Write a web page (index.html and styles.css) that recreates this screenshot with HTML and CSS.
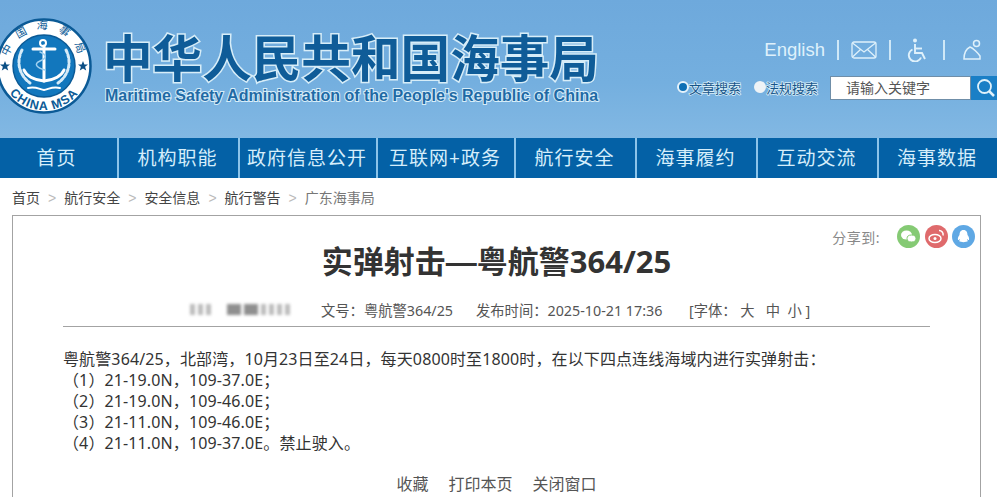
FILE: index.html
```html
<!DOCTYPE html>
<html lang="zh-CN">
<head>
    <meta charset="UTF-8">
    <meta name="viewport" content="width=device-width, initial-scale=1.0">
    <title>实弹射击—粤航警364/25</title>
    <link rel="stylesheet" href="styles.css">
</head>
<body>
    <header class="top">
        <svg class="logo" viewBox="0 0 98 98" width="98" height="98">
            <defs>
                <path id="arcTop" d="M17 65A36 36 0 1 1 81 65"/>
                <path id="arcBottom" d="M5 49a44 44 0 0 0 88 0"/>
            </defs>
            <circle cx="49" cy="49" r="46.500" fill="#fff" stroke="#0b5a96" stroke-width="2.500"/>
            <circle cx="49" cy="49" r="31" fill="#1277bd" stroke="#0b5a96" stroke-width="1.500"/>
            <text class="logo-cn"><textPath href="#arcTop" startOffset="52%" text-anchor="middle">中国海事局</textPath></text>
            <text class="logo-en"><textPath href="#arcBottom" startOffset="50%" text-anchor="middle">CHINA MSA</textPath></text>
            <path d="M10 44l1.400 3.500 3.600 0-2.900 2.300 1.100 3.700-3.200-2.100-3.200 2.100 1.100-3.700-2.900-2.300 3.600 0z" fill="#0b4f85"/>
            <path d="M88 44l1.400 3.500 3.600 0-2.900 2.300 1.100 3.700-3.200-2.100-3.200 2.100 1.100-3.700-2.900-2.300 3.600 0z" fill="#0b4f85"/>
            <g fill="none" stroke="#fff" stroke-linecap="round">
                <circle cx="48" cy="26" r="3" stroke-width="2"/>
                <path d="M49 29v35M38 32h22" stroke-width="3"/>
                <path d="M29 53c3 7 11 10 20 11 9-1 17-4 20-11" stroke-width="3"/>
                <path d="M45 35c7 3 7 6 0 9s-3 7 5 9" stroke="#9fd0f0" stroke-width="1.500"/>
                <path d="M27 33c-6 12-3 25 8 33M71 33c6 12 3 25-8 33" stroke="#d6ebf8" stroke-width="3" stroke-dasharray="3 2"/>
                <path d="M33 71c7-2 11 1 16 2 5-1 9-4 16-2" stroke-width="2"/>
            </g>
        </svg>
        <div class="brand">
            <div class="brand-cn">中华人民共和国海事局</div>
            <div class="brand-en">Maritime Safety Administration of the People's Republic of China</div>
        </div>
        <div class="tools">
            <div class="tool-links">
                <span class="english">English</span>
                <i class="bar"></i>
                <svg viewBox="0 0 26 18" width="26" height="18" fill="none" stroke="#dff1fb" stroke-width="1.300">
                    <rect x="1" y="1" width="24" height="16" rx="2"/>
                    <path d="M1.500 2l11.500 9 11.500-9M1.500 16l8-7.500M24.500 16l-8-7.500"/>
                </svg>
                <i class="bar"></i>
                <svg class="icon-wide" viewBox="0 0 20 24" width="20" height="24" fill="none" stroke="#dff1fb" stroke-width="1.900">
                    <circle cx="8" cy="2.500" r="2" fill="#dff1fb" stroke="none"/>
                    <path d="M8 6v9h7l3 6"/>
                    <path d="M8 10.500h7"/>
                    <path d="M5.500 11.500a6.300 6.300 0 1 0 8.500 8"/>
                </svg>
                <i class="bar"></i>
                <svg class="icon-last" viewBox="0 0 20 22" width="20" height="22" fill="none" stroke="#dff1fb" stroke-width="1.500">
                    <circle cx="14.500" cy="4.500" r="3"/>
                    <path d="M2 20c0-6 2-10 6-12 3 1 8 6 10 9v3z"/>
                </svg>
            </div>
            <div class="search-row">
                <label class="radio"><i class="dot dot-on"></i>文章搜索</label>
                <label class="radio"><i class="dot"></i>法规搜索</label>
                <div class="search">
                    <span class="search-input">请输入关键字</span>
                    <span class="search-btn">
                        <svg viewBox="0 0 20 20" width="20" height="20" fill="none" stroke="#dff1fb" stroke-width="1.800">
                            <circle cx="8.500" cy="8.500" r="6.500"/>
                            <path d="M13 13l5 5" stroke-width="2.500"/>
                        </svg>
                    </span>
                </div>
            </div>
        </div>
    </header>

    <nav class="nav">
        <a class="w-home">首页</a>
        <a class="w-a">机构职能</a>
        <a class="w-b">政府信息公开</a>
        <a class="w-b">互联网+政务</a>
        <a class="w-a">航行安全</a>
        <a class="w-a">海事履约</a>
        <a class="w-a">互动交流</a>
        <a class="w-last">海事数据</a>
    </nav>

    <div class="crumbs">
        <span class="crumb-dark">首页</span><b>&gt;</b>
        <span class="crumb-dark">航行安全</span><b>&gt;</b>
        <span class="crumb-dark">安全信息</span><b>&gt;</b>
        <span class="crumb-dark">航行警告</span><b>&gt;</b>
        <span>广东海事局</span>
    </div>

    <main class="panel">
        <div class="share">
            <span class="share-label">分享到:</span>
            <svg viewBox="0 0 23 23" width="23" height="23">
                <circle cx="11.500" cy="11.500" r="11.500" fill="#85ca74"/>
                <ellipse cx="9.500" cy="10" rx="5.500" ry="4.500" fill="#fff"/>
                <ellipse cx="14.500" cy="13.500" rx="4.500" ry="3.500" fill="#fff" stroke="#85ca74"/>
            </svg>
            <svg viewBox="0 0 23 23" width="23" height="23">
                <circle cx="11.500" cy="11.500" r="11.500" fill="#df6a6c"/>
                <ellipse cx="10" cy="13.500" rx="6" ry="4" fill="none" stroke="#fff" stroke-width="1.500"/>
                <circle cx="10" cy="13.500" r="1.500" fill="#fff"/>
                <path d="M14 5.500a4 4 0 0 1 4 5" fill="none" stroke="#fff" stroke-width="1.500"/>
            </svg>
            <svg viewBox="0 0 23 23" width="23" height="23">
                <circle cx="11.500" cy="11.500" r="11.500" fill="#5fa8e4"/>
                <path d="M11.500 5c3 0 4 2.500 4 5 1 1 2 3 1.500 5-1 0-1.500-.5-2-1 0 1 .5 1.500 1 2-2 1.500-7 1.500-9 0 .5-.5 1-1 1-2-.5.5-1 1-2 1-.5-2 .5-4 1.500-5 0-2.500 1-5 4-5z" fill="#fff"/>
            </svg>
        </div>

        <h1 class="title">实弹射击<span class="dash">—</span>粤航警364/25</h1>

        <div class="meta">
            <span class="blurred"><i class="sm"></i><i class="sm"></i><i class="sm"></i><i class="gap"></i><i class="lg"></i><i class="lg"></i><i class="sm"></i><i class="sm"></i><i class="sm"></i><i class="sm"></i></span>
            <span class="doc-no">文号：粤航警364/25</span>
            <span class="doc-time">发布时间：2025-10-21 17:36</span>
            <span class="doc-font">[字体： 大&nbsp;&nbsp; 中&nbsp; 小 ]</span>
        </div>

        <div class="content">
            <p>粤航警364/25，北部湾，10月23日至24日，每天0800时至1800时，在以下四点连线海域内进行实弹射击：</p>
            <p>（1）21-19.0N，109-37.0E；</p>
            <p>（2）21-19.0N，109-46.0E；</p>
            <p>（3）21-11.0N，109-46.0E；</p>
            <p>（4）21-11.0N，109-37.0E。禁止驶入。</p>
        </div>

        <div class="actions">
            <a>收藏</a>
            <a>打印本页</a>
            <a>关闭窗口</a>
        </div>
    </main>
</body>
</html>
```

FILE: styles.css
```css
* { box-sizing: border-box; }
html, body { height: 497px; overflow: hidden; }
body { margin: 0; background-color: #ffffff; font-family: "Noto Sans", "Noto Sans CJK SC", sans-serif; color: #333; }

.top { height: 138px; display: flex; background: linear-gradient(180deg, #6ea9dc 0%, #74afdf 60%, #82b8e3 100%); overflow: hidden; }
.logo { flex: none; margin: 17px 0 0 -5px; }
.logo-cn { font-family: "Noto Sans CJK SC", sans-serif; font-size: 11px; fill: #0b5a96; letter-spacing: 9.500px; }
.logo-en { font-family: "Liberation Sans", sans-serif; font-size: 12.500px; font-weight: bold; fill: #0b5a96; letter-spacing: 1px; }

.brand { flex: none; width: 500px; margin-left: 10px; padding-top: 24px; }
.brand-cn { font-family: "Noto Sans CJK SC", sans-serif; font-size: 49.600px; line-height: 62px; font-weight: 700; color: #0f5c98; white-space: nowrap; -webkit-text-stroke: 3px #d7edf8; paint-order: stroke fill; }
.brand-en { margin: 1px 0 0 2px; font-family: "Liberation Sans", sans-serif; font-size: 16px; line-height: 18px; font-weight: bold; color: #1f6aa5; white-space: nowrap; -webkit-text-stroke: 2px #d7edf8; paint-order: stroke fill; }

.tools { flex: 1; padding: 38px 0 0 74px; }
.tool-links { display: flex; align-items: center; justify-content: flex-end; height: 24px; padding-right: 15px; gap: 12px; }
.english { font-family: "Liberation Sans", sans-serif; font-size: 18.500px; color: #dff1fb; }
.bar { width: 2px; height: 20px; background-color: #cfe8f7; }
.icon-wide { margin: 0 4px; }
.icon-last { margin-left: 5px; }

.search-row { display: flex; align-items: center; margin-top: 14px; }
.radio { display: flex; align-items: center; width: 77px; padding-bottom: 2px; font-size: 13px; color: #16558a; white-space: nowrap; -webkit-text-stroke: 1.500px #d7edf8; paint-order: stroke fill; }
.dot { flex: none; width: 12px; height: 12px; border-radius: 50%; background-color: #eef3f6; }
.dot-on { background-color: #0c6fb5; border: 2px solid #e6f3fb; }
.search { display: flex; margin-left: -1px; }
.search-input { width: 141px; height: 24px; padding-left: 15px; background-color: #fff; border: 1px solid #6f8ea8; font-size: 14px; line-height: 22px; color: #555; }
.search-btn { width: 26px; height: 24px; display: flex; align-items: center; padding-left: 5px; background-color: #1a7fc6; }

.nav { display: flex; height: 40px; background-color: #0461a6; }
.nav a { display: block; padding-right: 2px; color: #d6eefb; font-size: 19px; line-height: 40px; text-align: center; letter-spacing: 1px; border-left: 2px solid #8cc4ea; }
.nav .w-home { width: 117px; border-left: none; padding-right: 4px; }
.nav .w-a { width: 121px; }
.nav .w-b { width: 138px; }
.nav .w-last { width: 120px; }

.crumbs { display: flex; height: 37px; padding: 9px 0 0 12px; font-size: 14px; line-height: 22px; color: #777; }
.crumbs b { margin: 0 8px; font-family: "Liberation Sans", sans-serif; font-weight: normal; color: #bbb; }
.crumb-dark { color: #444; }

.panel { position: relative; width: 969px; height: 282px; margin-left: 12px; padding: 0 50px; border: 1px solid #a3a3a3; border-bottom: none; }
.share { position: absolute; top: 9px; right: 5px; display: flex; align-items: center; gap: 4.500px; }
.share-label { margin-right: 12.500px; font-size: 14px; letter-spacing: .5px; color: #888; }

.title { margin: 23px 0 0; font-size: 31px; line-height: 44px; font-weight: 700; text-align: center; color: #333; }
.dash { font-family: "Liberation Sans", sans-serif; }

.meta { display: flex; align-items: center; height: 26px; margin-top: 16px; padding: 0 0 9px 124px; font-size: 14.300px; color: #555; border-bottom: 1px solid #a3a3a3; }
.blurred { display: flex; width: 134px; gap: 3px; padding-left: 3px; filter: blur(1.500px); }
.blurred i { display: block; height: 11px; background-color: #bcbcbc; }
.blurred .sm { width: 5px; }
.blurred .lg { width: 14px; background-color: #8f8f8f; }
.blurred .gap { width: 10px; background: none; }
.doc-no { width: 155px; }
.doc-time { width: 213px; }

.content { margin-top: 22px; font-size: 16px; line-height: 21px; letter-spacing: .12px; color: #333; }
.content p { margin: 0; white-space: nowrap; }

.actions { display: flex; justify-content: center; gap: 20px; margin-top: 19px; font-size: 16px; line-height: 22px; color: #555; }
```
